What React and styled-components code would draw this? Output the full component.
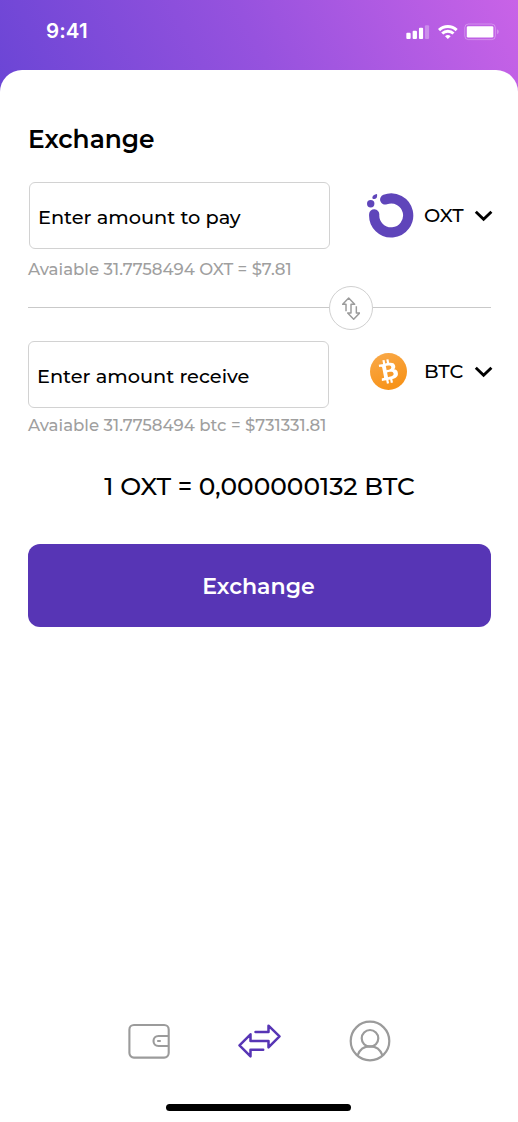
import styled, {createGlobalStyle} from 'styled-components'

const GlobalStyle = createGlobalStyle`
	* {
		box-sizing: border-box;
	}
	body {
		margin: 0;
		font-family: Montserrat, Inter, sans-serif;
		color: #000;
	}
`

const Page = styled.div`
	display: flex;
	flex-direction: column;
	width: 518px;
	height: 1122px;
	overflow: hidden;
	background: #fff linear-gradient(64deg, #6a45d5 0%, #9652de 50%, #c963e7 100%) no-repeat;
	background-size: 518px 100px;
`
const StatusBar = styled.div`
	display: flex;
	justify-content: space-between;
	height: 70.3px;
	padding: 0 19px 0 46px;
`
const Time = styled.div`
	margin-top: 19px;
	font-family: Inter, sans-serif;
	font-size: 20.5px;
	line-height: 24px;
	font-weight: 600;
	letter-spacing: 0.1px;
	color: #fff;
`
const StatusIcons = styled.svg`
	width: 93px;
	height: 18px;
	margin-top: 23px;
`
const Sheet = styled.main`
	flex: 1;
	display: flex;
	flex-direction: column;
	padding: 54px 27px 0 28px;
	border-radius: 22px 22px 0 0;
	background-color: #fff;
`
const Title = styled.h1`
	margin: 0;
	font-size: 24.87px;
	line-height: 30px;
	font-weight: 600;
`
const Row = styled.div`
	display: flex;
	height: 67px;
	margin-top: ${(props)=>props.$top}px;
	padding-left: ${(props)=>props.$indent || 0}px;
`
const AmountBox = styled.div`
	width: 301px;
	height: 67px;
	padding: 4px 0 0 8px;
	border: 1.5px solid #d2d2d2;
	border-radius: 6px;
	font-size: 19.34px;
	line-height: 60px;
	font-weight: 500;
	white-space: nowrap;
`
const Currency = styled.div`
	flex: 1;
	display: flex;
	align-items: center;
	justify-content: flex-end;
	height: ${(props)=>props.$height}px;
	margin-right: -2.5px;
`
const CurrencyName = styled.div`
	width: 49.5px;
	padding-bottom: 2px;
	font-size: 19.34px;
	line-height: 24px;
	font-weight: 500;
`
const CoinSlot = styled.div`
	display: flex;
	align-items: center;
	justify-content: center;
	width: 48px;
	margin-right: ${(props)=>props.$gap}px;
`
const Available = styled.div`
	margin-top: ${(props)=>props.$top}px;
	font-size: 16.58px;
	line-height: 20px;
	font-weight: 500;
	color: #9f9f9f;
	white-space: nowrap;
`
const Divider = styled.div`
	display: flex;
	align-items: center;
	height: 44px;
	margin-top: 7px;
`
const Line = styled.div`
	width: ${(props)=>props.$width}px;
	height: 1px;
	margin-bottom: 2px;
	background-color: #c9c9c9;
`
const SwapButton = styled.button`
	display: flex;
	align-items: center;
	justify-content: center;
	width: 44px;
	height: 44px;
	padding: 0;
	border: 1.5px solid #d0d0d0;
	border-radius: 50%;
	background-color: #fff;
`
const Rate = styled.div`
	margin-top: 36px;
	font-size: 24.87px;
	line-height: 30px;
	font-weight: 500;
	text-align: center;
	white-space: nowrap;
`
const ExchangeButton = styled.button`
	width: 463px;
	height: 83px;
	margin-top: 43px;
	padding: 1px 2px 0 0;
	border: none;
	border-radius: 12px;
	background-color: #5735b5;
	font-family: inherit;
	font-size: 22.1px;
	font-weight: 600;
	color: #fff;
`
const BottomNav = styled.nav`
	display: flex;
	align-items: center;
	justify-content: space-between;
	width: 264px;
	height: 44px;
	margin: auto auto 0 100px;
`
const HomeBar = styled.div`
	width: 185px;
	height: 7px;
	margin: 41.4px 0 10.6px 138px;
	border-radius: 4px;
	background-color: #000;
`

const Chevron = () => (
	<svg width="20" height="12" viewBox="0 0 20 12" fill="none" stroke="#000" strokeWidth="2.9">
		<path d="M1.8 1.8L9.6 9.2L17.4 1.8" />
	</svg>
)

const OxtLogo = () => (
	<svg width="48" height="48" viewBox="0 0 48 48" fill="#5f45ba">
		<path
			d="M19.2 7.5A17 17 0 1 1 8.2 22.4"
			fill="none"
			stroke="#5f45ba"
			strokeWidth="10.2"
			strokeLinecap="round"
		/>
		<circle cx="4.7" cy="11.7" r="3.7" />
		<path d="M6.3 5.8C6.2 3.4 8.4 2.6 11 1.9C11.5 4.5 10.8 6.8 8.5 7C7.2 7.1 6.4 6.8 6.3 5.8Z" />
	</svg>
)

const BtcLogo = () => (
	<svg width="37" height="37" viewBox="0 0 24 24">
		<defs>
			<linearGradient id="btc" x1="0" y1="0" x2="0.4" y2="1">
				<stop offset="0" stopColor="#f9aa4b" />
				<stop offset="1" stopColor="#f7931a" />
			</linearGradient>
		</defs>
		<circle cx="12" cy="12" r="12" fill="url(#btc)" />
		<path
			transform="rotate(-25 12 12) translate(-0.6 -0.6) scale(1.05)"
			fill="#fff"
			fillRule="evenodd"
			d="M17.288 10.291c.24-1.59-.974-2.45-2.64-3.03l.54-2.153-1.315-.33-.525 2.107c-.345-.087-.705-.167-1.064-.25l.526-2.127-1.32-.33-.54 2.165c-.285-.067-.565-.132-.84-.2l-1.815-.45-.35 1.407s.975.225.955.236c.535.136.63.486.615.766l-1.477 5.92c-.075.166-.24.406-.614.314.015.02-.96-.24-.96-.24l-.66 1.51 1.71.426.93.242-.54 2.19 1.32.327.54-2.17c.36.1.705.19 1.05.273l-.51 2.154 1.32.33.545-2.19c2.24.427 3.93.257 4.64-1.774.57-1.637-.03-2.58-1.217-3.196.854-.193 1.5-.76 1.68-1.93zm-3 4.22c-.404 1.64-3.157.75-4.05.53l.72-2.9c.896.23 3.757.67 3.33 2.37zm.41-4.24c-.37 1.49-2.662.735-3.405.55l.654-2.64c.744.18 3.137.524 2.75 2.084z"
		/>
	</svg>
)

/*Start of function*/

const App = () => {
	return (
		<Page>
			<GlobalStyle />
			<StatusBar>
				<Time>9:41</Time>
				<StatusIcons viewBox="78 68 280 54" fill="#fff">
					<rect x="79" y="97" width="13" height="19" rx="3" />
					<rect x="98" y="91" width="13" height="25" rx="3" />
					<rect x="117" y="82" width="12.5" height="34" rx="3" />
					<rect x="135" y="75" width="12.5" height="41" rx="3" opacity="0.3" />
					<g fill="none" stroke="#fff" strokeWidth="9">
						<path d="M177.500 89.500A38 38 0 0 1 230.500 89.500" />
						<path d="M187 99.500A24.500 24.500 0 0 1 221 99.500" />
					</g>
					<path d="M195.500 108A13 13 0 0 1 212.500 108L204 116Z" />
					<rect x="255" y="71" width="92" height="47" rx="11" fill="none" stroke="#fff" strokeWidth="3" opacity="0.3" />
					<rect x="261" y="77.500" width="80" height="34" rx="4" />
					<path d="M352 87Q357.500 89 357.500 94.500T352 102Z" opacity="0.3" />
				</StatusIcons>
			</StatusBar>
			<Sheet>
				<Title>Exchange</Title>
				<Row $top={28} $indent={1}>
					<AmountBox>Enter amount to pay</AmountBox>
					<Currency $height={67}>
						<CoinSlot $gap={10}><OxtLogo /></CoinSlot>
						<CurrencyName>OXT</CurrencyName>
						<Chevron />
					</Currency>
				</Row>
				<Available $top={10}>Avaiable 31.7758494 OXT = $7.81</Available>
				<Divider>
					<Line $width={301} />
					<SwapButton>
						<svg width="18.7" height="23.3" viewBox="96 79 56 70" fill="none" stroke="#9b9b9b" strokeWidth="4.4">
							<path d="M108 122V101H98L116 82L134 101H123V127H113L131 146L149 127H139V107" strokeLinejoin="round" />
						</svg>
					</SwapButton>
					<Line $width={118} />
				</Divider>
				<Row $top={11}>
					<AmountBox>Enter amount receive</AmountBox>
					<Currency $height={61}>
						<CoinSlot $gap={11.5}><BtcLogo /></CoinSlot>
						<CurrencyName>BTC</CurrencyName>
						<Chevron />
					</Currency>
				</Row>
				<Available $top={7}>Avaiable 31.7758494 btc = $731331.81</Available>
				<Rate>1 OXT = 0,000000132 BTC</Rate>
				<ExchangeButton>Exchange</ExchangeButton>
				<BottomNav>
					<svg width="44" height="44" viewBox="0 0 44 44" fill="none" stroke="#9b9b9b" strokeWidth="2.1" strokeLinecap="round">
						<rect x="1.400" y="6" width="39.300" height="32.600" rx="4.500" />
						<path d="M40 17H30.500C27.300 17 25.500 19.300 25.500 22S27.300 27 30.500 27H40M30 22H32" />
					</svg>
					<svg width="44" height="44" viewBox="0.5 -4 44 44" fill="none" stroke="#5735b5" strokeWidth="2.500">
						<path d="M18 9H31V2.700L42 13.300L31 24.300V18H13V11.300L2 22.300L13 33.300V26.700H25.700" strokeLinecap="round" strokeLinejoin="round" />
					</svg>
					<svg width="44" height="44" viewBox="0 0 44 44" fill="none" stroke="#9b9b9b" strokeWidth="2.200">
						<circle cx="22" cy="22" r="19.300" />
						<circle cx="22" cy="19.300" r="8.300" />
						<path d="M9.500 36.500C11.500 30.500 16.300 27.300 22 27.300S32.500 30.500 34.500 36.500" />
					</svg>
				</BottomNav>
				<HomeBar />
			</Sheet>
		</Page>
	)
}
export default App
